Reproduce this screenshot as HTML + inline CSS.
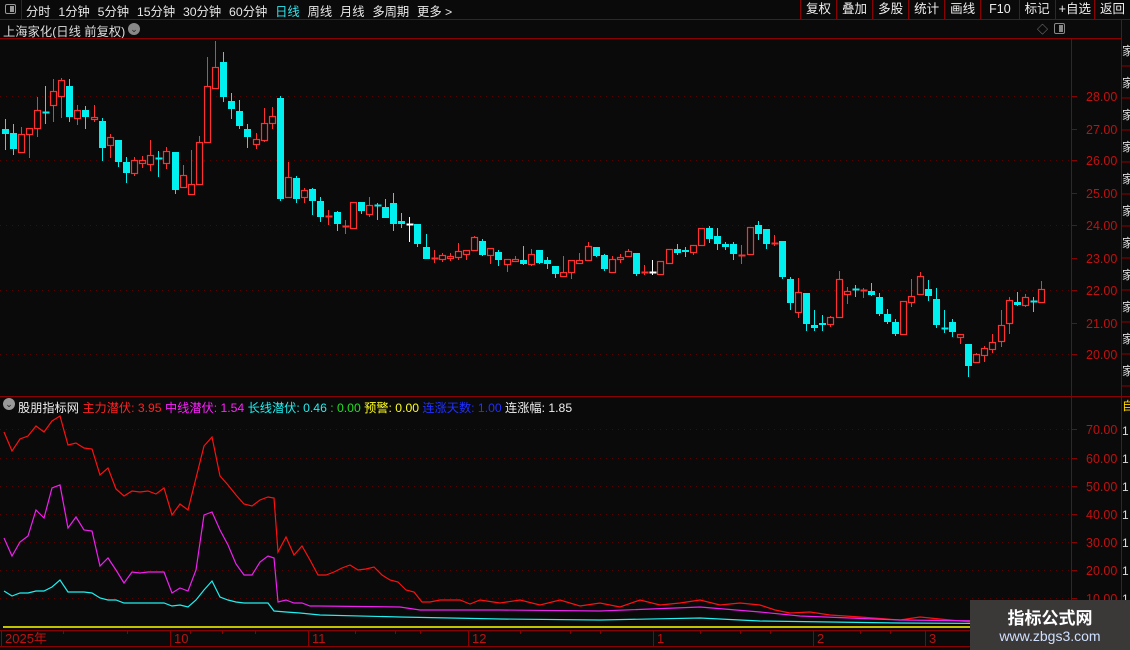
<!DOCTYPE html>
<html><head><meta charset="utf-8"><style>
*{margin:0;padding:0;box-sizing:border-box}
body{width:1130px;height:650px;background:#0a0a0a;overflow:hidden;position:relative;font-family:"Liberation Sans","Noto Sans CJK SC",sans-serif;font-size:12px;color:#ddd}
.top{position:absolute;left:0;top:0;width:1130px;height:20px;border-bottom:1px solid #8b0000}
.tabs{position:absolute;left:26px;top:2px;white-space:nowrap;color:#e8e8e8;font-size:12.3px}
.tabs span{margin-right:7.8px}
.btns{position:absolute;right:0;top:0;height:19px;display:flex}
.btns div{border-left:1px solid #8b0000;padding:0 5px;line-height:19px;color:#eee;font-size:12.5px}
.ab{position:absolute}
</style></head><body>
<div class="top">
 <div class="ab" style="left:0;top:0;width:22px;height:19px;border-right:1px solid #8b0000"></div>
 <div class="ab" style="left:5px;top:4px;width:11px;height:10px;border:1px solid #999;border-radius:2px"><div style="position:absolute;right:1px;top:1px;width:4px;height:6px;background:#999"></div></div>
 <div class="tabs"><span>分时</span><span>1分钟</span><span>5分钟</span><span>15分钟</span><span>30分钟</span><span>60分钟</span><span style="color:#2ee8f0">日线</span><span>周线</span><span>月线</span><span>多周期</span><span>更多 &gt;</span></div>
 <div class="btns"><div>复权</div><div>叠加</div><div>多股</div><div>统计</div><div>画线</div><div style="padding:0 8px">F10</div><div>标记</div><div style="padding:0 3px">+自选</div><div>返回</div></div>
</div>
<div class="ab" style="left:3px;top:22px;color:#ddd;font-size:12.3px">上海家化(日线 前复权)</div>
<div class="ab" style="left:128px;top:23px;width:12px;height:12px;border-radius:6px;background:#888;color:#222;font-size:9px;text-align:center;line-height:12px">⌄</div>
<div class="ab" style="left:1037px;top:21px;color:#888;font-size:11px">◇</div>
<div class="ab" style="left:1054px;top:23px;width:11px;height:11px;border:1px solid #888;border-radius:2px"><div style="position:absolute;right:1px;top:1px;width:4px;height:7px;background:#888"></div></div>
<svg class="ab" style="left:0;top:0" width="1130" height="650" id="s"></svg>
<div class="ab" style="left:3px;top:398px;width:12px;height:12px;border-radius:6px;background:#999;color:#222;font-size:9px;text-align:center;line-height:12px">⌄</div>
<div class="ab" style="left:18px;top:398px;white-space:nowrap;font-size:12.2px"><span style="color:#eee">股朋指标网</span> <span style="color:#ff2020">主力潜伏: 3.95</span> <span style="color:#ff20ff">中线潜伏: 1.54</span> <span style="color:#20f0f0">长线潜伏: 0.46</span> <span style="color:#20e020">: 0.00</span> <span style="color:#ffff20">预警: 0.00</span> <span style="color:#2030ff">连涨天数: 1.00</span> <span style="color:#eee">连涨幅: 1.85</span></div>
<div class="ab" style="left:970px;top:600px;width:160px;height:50px;background:#3b3838"></div>
<div class="ab" style="left:970px;top:604px;width:160px;text-align:center;color:#fff;font-weight:bold;font-size:17px">指标公式网</div>
<div class="ab" style="left:970px;top:628px;width:160px;text-align:center;color:#cfe0ff;font-size:14px">www.zbgs3.com</div>
<script>
var s=document.getElementById('s'),h='';
function L(x1,y1,x2,y2,c,w,d){h+='<line x1="'+x1+'" y1="'+y1+'" x2="'+x2+'" y2="'+y2+'" stroke="'+c+'" stroke-width="'+(w||1)+'"'+(d?' stroke-dasharray="'+d+'"':'')+'/>';}
function T(x,y,t,c,sz){h+='<text x="'+x+'" y="'+y+'" fill="'+c+'" font-size="'+(sz||12)+'" font-family="Liberation Sans,Noto Sans CJK SC,sans-serif">'+t+'</text>';}
L(0,38.5,1121,38.5,'#8b0000');
L(1071.5,38,1071.5,650,'#8b0000');L(1121.5,20,1121.5,650,'#8b0000');
L(0,396.5,1130,396.5,'#8b0000');L(0,630.5,1071,630.5,'#8b0000');L(0,646.5,1071,646.5,'#8b0000');
var pl=[[28,96],[27,129],[26,160],[25,193],[24,225],[23,258],[22,290],[21,323],[20,354]];
pl.forEach(function(p,i){L(1071,p[1]+.5,1077,p[1]+.5,'#8b0000');T(1086,p[1]+5,p[0].toFixed(2),'#c01010',12.5);if(i%2==0)L(0,p[1]+.5,1071,p[1]+.5,'#5a0000',1,'1 5');});
var il=[[70,429],[60,458],[50,486],[40,514],[30,542],[20,570],[10,598]];
il.forEach(function(p){L(1071,p[1]+.5,1077,p[1]+.5,'#8b0000');T(1086,p[1]+5,p[0].toFixed(2),'#c01010',12.5);L(0,p[1]+.5,1071,p[1]+.5,'#5a0000',1,'1 5');});
for(var i=0;i<11;i++){T(1122,55+i*32,'家','#ddd',12);L(1121,66+i*32,1130,66+i*32,'#8b0000');}
T(1122,410,'自','#ffd700',12);
for(var i=0;i<8;i++)T(1122,435+i*28,'1','#ddd',12);
var C=[['c',129,134,119,150],['c',133,149,124,155],['r',134,152,127,152],['r',128,134,128,158],['r',110,128,97,137],['c',112,112,86,124],['r',91,105,79,122],['r',80,96,78,118],['c',86,117,79,122],['r',110,118,105,125],['c',110,117,106,129],['r',117,119,105,122],['c',121,148,118,161],['r',137,145,134,158],['c',140,162,140,167],['c',162,173,157,183],['r',160,173,157,176],['r',160,163,156,168],['r',155,164,140,171],['c',158,158,151,177],['r',151,163,147,169],['c',152,190,152,194],['r',175,187,165,188],['r',184,194,150,194],['r',142,184,136,184],['r',86,142,57,142],['r',67,88,41,88],['c',62,97,52,102],['c',101,109,93,119],['c',111,126,100,129],['c',129,137,124,148],['r',139,144,133,149],['r',123,140,108,142],['r',116,123,107,129],['c',98,199,96,201],['r',177,197,162,197],['c',178,199,176,203],['r',190,197,188,203],['c',189,201,188,215],['c',201,217,197,222],['r',216,216,210,225],['c',212,224,211,231],['r',226,226,220,234],['r',202,228,202,228],['c',202,211,202,214],
['r',205,214,197,217],['c',205,205,203,220],['c',207,218,199,218],['c',203,224,193,231],['c',221,224,213,228],['w',224,224,217,242],['c',224,244,224,247],['c',247,259,234,259],['r',258,259,250,263],['r',255,259,253,262],['r',256,258,253,261],['r',251,257,243,260],['r',250,254,250,260],['r',237,250,236,250],['c',241,255,239,256],['r',248,255,248,264],['c',252,260,250,266],['r',259,264,259,272],['r',259,261,256,261],['c',260,264,246,265],['r',254,264,249,266],['c',250,263,250,264],['c',260,264,257,269],['c',266,274,266,278],['r',272,276,256,276],['r',260,272,260,279],['r',260,263,253,263],['r',246,260,242,260],['c',247,256,247,257],['c',255,269,254,271],['r',259,272,256,272],['r',257,259,254,263],['r',251,256,249,256],['c',253,274,253,276],['r',272,273,265,275],['w',272,272,260,275],['r',261,274,261,274],['r',249,263,249,263],['c',249,253,244,255],['c',250,252,247,257],['r',245,252,245,255],['r',228,245,228,245],['c',228,239,226,243],['c',236,244,228,250],['c',244,247,242,250],
['c',244,254,242,260],['r',255,255,245,264],['r',227,254,227,255],['c',225,234,221,240],['c',229,244,229,249],['r',243,243,235,246],['c',241,277,241,279],['c',279,303,277,310],['r',292,312,278,318],['c',293,324,293,331],['c',325,328,310,331],['c',323,325,315,331],['r',317,324,316,327],['r',279,317,271,317],['r',291,294,287,304],['c',289,289,285,297],['r',290,290,288,298],['c',291,295,283,296],['c',297,314,293,316],['c',314,322,309,324],['c',322,334,319,336],['r',301,334,301,334],['r',296,302,279,307],['r',276,294,272,295],['c',289,296,280,301],['c',299,325,288,328],['c',328,328,310,333],['c',322,332,319,337],['r',334,337,334,344],['c',344,366,344,377],['r',354,362,353,363],['r',348,355,346,362],['r',342,349,334,353],['r',325,341,310,347],['r',300,323,297,334],['c',302,305,292,306],['r',297,305,294,307],['c',301,301,297,312],['r',289,302,281,302]];
C.forEach(function(k,i){var x=Math.round(4.5+i*8.098)+.5,col=k[0]=='r'?'#ff3030':k[0]=='c'?'#00f0f0':'#ffffff';
 L(x,k[3],x,k[4],col);
 if(k[2]-k[1]<1.5){L(x-3,k[1]+.5,x+4,k[1]+.5,col,2);}
 else if(k[0]=='r'){h+='<rect x="'+(x-3)+'" y="'+(k[1]+.5)+'" width="6" height="'+(k[2]-k[1])+'" fill="#0a0a0a" stroke="'+col+'" stroke-width="1.2"/>';}
 else h+='<rect x="'+(x-3.5)+'" y="'+k[1]+'" width="7" height="'+(k[2]-k[1])+'" fill="'+col+'"/>';});
function P(a,c){h+='<polyline fill="none" stroke="'+c+'" stroke-width="1.2" points="'+a.map(function(p){return p.join(',')}).join(' ')+'"/>';}
P([[4,432],[12,451],[20,439],[28,436],[36,426],[44,432],[52,421],[60,416],[68,445],[76,443],[84,448],[92,449],[100,475],[108,468],[116,489],[124,496],[132,491],[140,492],[148,491],[156,494],[164,488],[172,515],[180,504],[188,510],[196,478],[204,446],[212,437],[220,476],[228,485],[236,495],[244,504],[252,506],[260,500],[268,497],[274,498],[278,552],[286,537],[294,555],[302,546],[310,560],[318,575],[326,575],[334,572],[342,568],[350,565],[358,570],[366,569],[374,567],[382,575],[390,580],[398,582],[406,590],[414,592],[422,602],[430,602],[440,600],[460,600],[470,604],[480,600],[500,603],[520,600],[540,605],[560,600],[580,606],[600,603],[620,607],[640,600],[660,605],[680,603],[700,600],[720,605],[740,603],[760,605],[775,610],[790,613],[810,612],[830,615],[860,617],[900,620],[920,617],[960,621],[1000,624],[1070,623]],'#ff1010');
P([[4,538],[12,556],[20,542],[28,536],[36,510],[44,518],[52,488],[60,485],[68,528],[76,517],[84,530],[92,531],[100,566],[108,558],[116,570],[124,583],[132,572],[140,573],[148,572],[156,572],[164,572],[172,593],[180,588],[188,591],[196,570],[204,515],[212,512],[220,530],[228,545],[236,564],[244,575],[252,575],[260,562],[268,556],[274,558],[278,602],[286,600],[294,603],[302,603],[310,606],[318,606],[400,607],[420,610],[500,610],[600,611],[700,607],[760,612],[800,616],[850,618],[900,620],[1070,622]],'#f020f0');
P([[4,591],[12,596],[20,593],[28,593],[36,591],[44,591],[52,587],[60,580],[68,592],[76,592],[84,592],[92,593],[100,598],[108,600],[116,600],[124,603],[164,603],[172,606],[180,605],[188,607],[196,600],[204,590],[212,581],[220,597],[228,600],[236,602],[244,603],[268,603],[274,611],[286,612],[300,613],[320,615],[400,617],[500,619],[600,620],[700,618],[760,621],[900,623],[1070,624]],'#20f0f0');
L(3,627,1071,627,'#ffff00',1.5);
[[3,'2025年'],[172,'10'],[310,'11'],[470,'12'],[655,'1'],[815,'2'],[927,'3']].forEach(function(d){L(d[0]-2+.5,631,d[0]-2+.5,646,'#8b0000');T(d[0]+2,643,d[1],'#c01010',13);});
[63,127,190,222,255,355,395,420,520,570,600,700,740,770,860,890].forEach(function(x){L(x+.5,631,x+.5,634,'#8b0000');});
s.innerHTML=h;
</script>
</body></html>
